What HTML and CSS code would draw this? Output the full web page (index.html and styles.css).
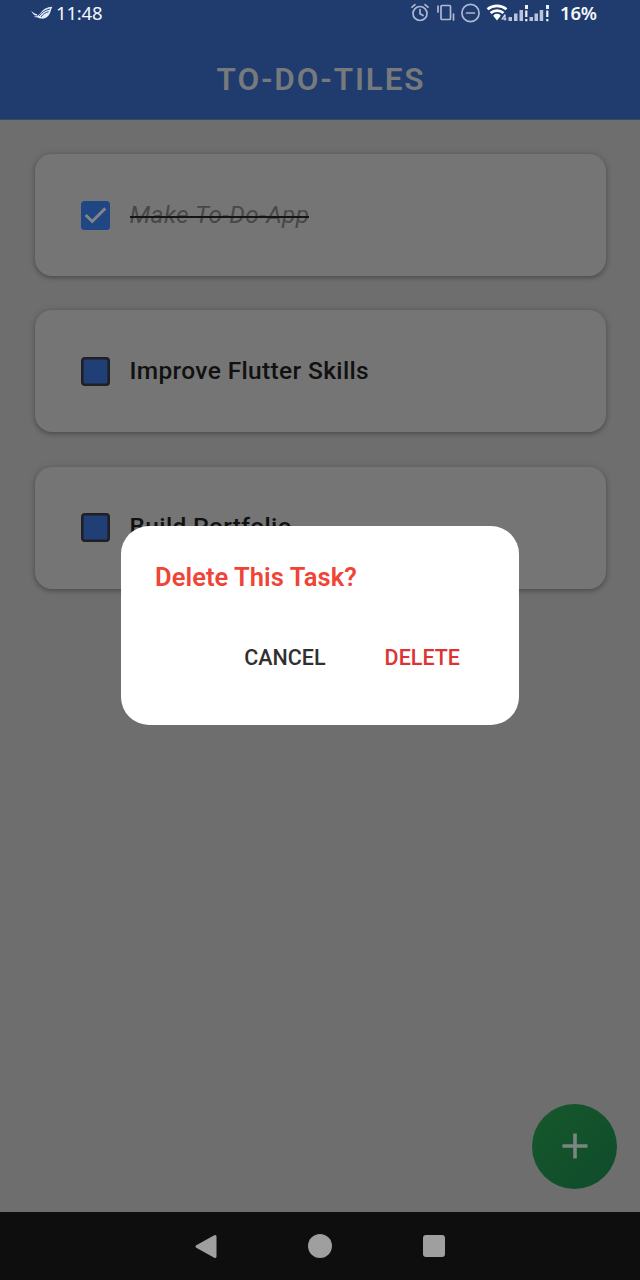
FILE: index.html
```html
<!DOCTYPE html>
<html lang="en">
<head>
<meta charset="utf-8">
<title>To-Do-Tiles</title>
<link rel="stylesheet" href="styles.css">
</head>
<body>
<div class="screen">
  <header class="app-header">
    <div class="status-bar">
      <svg class="brand" width="22" height="14" viewBox="0 0 22 14"><path d="M.3 4.500c1.500 2.300 3.300 3.400 6 3.800L5.600 9.800C3 9.300 1 7.600.3 4.500zM3 10.500c3.500.2 5-1.600 7-4C12.500 3.300 15.500 1.200 21.500.8c-1.500 1.900-1.300 4-2.800 7-1.700 3.400-4.500 5.200-8 4.800-2-.2-3.200-.7-4.500-1.400-1.300.3-2.300.1-3.200-.7z" fill="#e3eafc"/><path d="M8.200 9.900C11 6 14 4.200 19 3M10 11c2-3 4.200-4.400 7.600-5.300" fill="none" stroke="#203b6e" stroke-width=".9"/></svg>
      <span class="clock">11:48</span>
      <svg class="status-icons" width="141" height="22" viewBox="0 0 141 22">
        <g fill="none" stroke="#aeb9d2" stroke-width="1.700" stroke-linecap="round" stroke-linejoin="round">
          <circle cx="10" cy="11.500" r="7"/><path d="M10 7.500v4.300l3 1.800M2 5.200 5 2.700M18 5.200l-3-2.500"/>
          <rect x="31" y="3.500" width="9.500" height="14" rx="1"/><path d="M28 4v6M43.500 12v6"/>
          <circle cx="60.500" cy="11" r="8.600"/><path d="M56.500 11h8"/>
        </g>
        <g fill="none" stroke="#fff" stroke-width="2.600"><path d="M77.500 7.300c5.500-4.600 13.500-4.600 19 0M80.600 11c3.700-3.200 9.200-3.200 12.900 0"/><path d="M84 14.200c2-1.500 4-1.500 6 0"/></g>
        <path d="m83.500 14 3.500 4.500 3.500-4.500z" fill="#fff"/>
        <path d="M95 12.500 92.200 17h4.300M95 12.500v6" fill="none" stroke="#d9e0ee" stroke-width="1.200"/>
        <g fill="#b9c3da"><path d="M98.500 15h3.500v4h-3.500zM104 11.500h3.500V19H104zM109.500 8h3.500v11h-3.500zM119.500 15h3.500v4h-3.500zM124.500 11.500h3.500V19h-3.500zM129.700 8h3.500v11h-3.500z"/></g>
        <g fill="#edf1fa"><path d="M115 3h3v4h-3zM115.200 8.500h2.200V15h-2.200zM115.200 17h2.200v2.300h-2.200zM136 3h3v4h-3zM136.200 8.500h2.200V15h-2.200zM136.200 17h2.200v2.300h-2.200z"/></g>
      </svg>
      <span class="battery">16%</span>
    </div>
    <h1 class="title">TO-DO-TILES</h1>
  </header>
  <main class="content">
    <section class="card">
      <svg class="check" viewBox="0 0 29 29"><rect width="29" height="29" rx="3.500" fill="#214684"/><path d="m4.700 14 6.500 6.500L24.300 7.400" fill="none" stroke="#858585" stroke-width="2.900"/></svg>
      <span class="task done">Make To-Do-App</span>
    </section>
    <section class="card">
      <svg class="check" viewBox="0 0 29 29"><rect x="1.300" y="1.300" width="26.400" height="26.400" rx="2.500" fill="#203f77" stroke="#1f2023" stroke-width="2.600"/></svg>
      <span class="task">Improve Flutter Skills</span>
    </section>
    <section class="card">
      <svg class="check" viewBox="0 0 29 29"><rect x="1.300" y="1.300" width="26.400" height="26.400" rx="2.500" fill="#203f77" stroke="#1f2023" stroke-width="2.600"/></svg>
      <span class="task">Build Portfolio</span>
    </section>
    <div class="fab"><svg width="26" height="26" viewBox="0 0 26 26"><path d="M13 .5v25M.5 13h25" stroke="#7c8680" stroke-width="3.600"/></svg></div>
  </main>
  <nav class="nav-bar">
    <svg width="24" height="26" viewBox="0 0 24 26"><path d="M3 13.500 21 3.500v20z" fill="#9f9f9f" stroke="#9f9f9f" stroke-width="3" stroke-linejoin="round"/></svg>
    <svg width="24" height="24" viewBox="0 0 24 24"><circle cx="12" cy="12" r="12" fill="#9f9f9f"/></svg>
    <svg width="22" height="22" viewBox="0 0 22 22"><rect width="22" height="22" rx="3" fill="#9f9f9f"/></svg>
  </nav>
  <div class="dialog">
    <h2 class="dialog-title">Delete This Task?</h2>
    <div class="actions"><span class="cancel">CANCEL</span><span class="delete">DELETE</span></div>
  </div>
</div>
</body>
</html>
```
FILE: styles.css
```css
* { box-sizing: border-box; }
body { margin: 0; font-family: Roboto, sans-serif; }
.screen { position: relative; display: flex; flex-direction: column; width: 640px; height: 1280px; overflow: hidden; background: #6e6e6e; }
.app-header { height: 120px; flex: none; background: #203b6e; border-bottom: 1px solid #384968; }
.status-bar { display: flex; align-items: center; height: 27px; padding: 0 42px 1px 31px; color: #f5f7fc; font-family: "Noto Sans", sans-serif; }
.clock { margin-left: 3px; padding-bottom: 2px; font-size: 18.500px; letter-spacing: -0.200px; }
.status-icons { margin-left: auto; }
.battery { width: 38px; margin-left: 9px; padding-bottom: 2px; font-size: 18.500px; font-weight: 600; letter-spacing: -0.200px; white-space: nowrap; }
.title { margin: 0; padding-left: 2px; line-height: 105px; text-align: center; font-size: 31.500px; font-weight: 600; letter-spacing: 1.850px; color: #777a7d; }
.content { flex: 1; display: flex; flex-direction: column; gap: 34.400px; padding: 34px 34.500px 0; }
.card { display: flex; align-items: center; flex: none; height: 122px; padding-left: 46px; gap: 20px; border-radius: 17px; background: #757575; box-shadow: 0 2px 4px rgba(20, 30, 28, .32), 0 0 7px rgba(20, 35, 30, .15); }
.check { width: 29px; height: 29px; flex: none; }
.task { padding-bottom: 2px; font-size: 24.500px; font-weight: 500; letter-spacing: .350px; color: #111; white-space: nowrap; }
.done { position: relative; font-weight: 400; font-style: italic; letter-spacing: .380px; color: #484848; }
.done::after { content: ""; position: absolute; left: 0; right: 0; top: 16.500px; height: 1.500px; background: #151515; }
.fab { display: flex; align-items: center; justify-content: center; width: 85px; height: 85px; margin: auto -11.500px 23.500px auto; border-radius: 50%; background: linear-gradient(135deg, #17582b, #0e4b2c); }
.nav-bar { display: flex; align-items: center; justify-content: space-between; flex: none; height: 68px; padding: 0 195.500px 0 194px; background: #0e0e0e; }
.dialog { position: absolute; left: 121px; top: 526px; width: 398px; height: 199px; padding: 34px 59px 0 34px; border-radius: 28px; background: #fff; }
.dialog-title { margin: 0; font-size: 25.500px; line-height: 34px; font-weight: 600; letter-spacing: .060px; color: #f04437; white-space: nowrap; }
.actions { display: flex; justify-content: flex-end; gap: 59px; margin-top: 47px; font-size: 21.500px; line-height: 34px; font-weight: 500; }
.cancel { color: #303030; }
.delete { color: #dc3434; }
```
